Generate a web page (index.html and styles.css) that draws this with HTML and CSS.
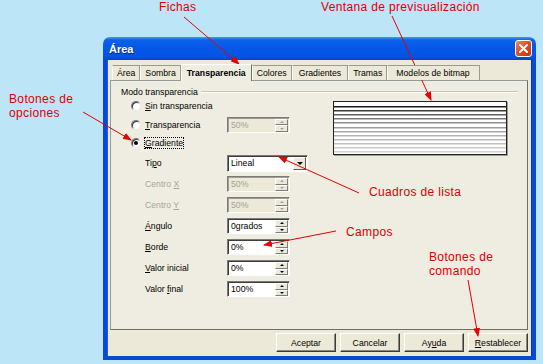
FILE: index.html
```html
<!DOCTYPE html>
<html>
<head>
    <meta charset="utf-8">
    <link rel="stylesheet" href="styles.css">
</head>
<body>
    <div class="window">
        <div class="titlebar">
            <span class="title">Área</span>
            <span class="close">
                <svg width="9" height="9" viewBox="0 0 9 9">
                    <path d="M1 1 L8 8 M8 1 L1 8" stroke="#fff" stroke-width="2" stroke-linecap="square"/>
                </svg>
            </span>
        </div>

        <div class="frame">
            <div class="tabs">
                <div class="tab">Área</div>
                <div class="tab">Sombra</div>
                <div class="tab active">Transparencia</div>
                <div class="tab">Colores</div>
                <div class="tab roomy">Gradientes</div>
                <div class="tab">Tramas</div>
                <div class="tab wide">Modelos de bitmap</div>
            </div>

            <div class="panel">
                <div class="group-title">
                    <span>Modo transparencia</span>
                    <div class="rule"></div>
                </div>

                <div class="group-body">
                    <div class="form">
                        <div class="radio-row">
                            <span class="radio"></span>
                            <label><u>S</u>in transparencia</label>
                        </div>
                        <div class="radio-row">
                            <span class="radio"></span>
                            <label><u>T</u>ransparencia</label>
                            <div class="field disabled">
                                <span class="value">50%</span>
                                <span class="spinner"><span class="up"></span><span class="down"></span></span>
                            </div>
                        </div>
                        <div class="radio-row">
                            <span class="radio checked"></span>
                            <label><span class="focus"><u>G</u>radiente</span></label>
                        </div>

                        <div class="field-row">
                            <label>Ti<u>p</u>o</label>
                            <div class="field select">
                                <span class="value">Lineal</span>
                                <span class="drop"></span>
                            </div>
                        </div>
                        <div class="field-row">
                            <label class="dim">Centro <u>X</u></label>
                            <div class="field disabled">
                                <span class="value">50%</span>
                                <span class="spinner"><span class="up"></span><span class="down"></span></span>
                            </div>
                        </div>
                        <div class="field-row">
                            <label class="dim">Centro <u>Y</u></label>
                            <div class="field disabled">
                                <span class="value">50%</span>
                                <span class="spinner"><span class="up"></span><span class="down"></span></span>
                            </div>
                        </div>
                        <div class="field-row">
                            <label><u>Á</u>ngulo</label>
                            <div class="field">
                                <span class="value">0grados</span>
                                <span class="spinner"><span class="up"></span><span class="down"></span></span>
                            </div>
                        </div>
                        <div class="field-row">
                            <label><u>B</u>orde</label>
                            <div class="field">
                                <span class="value">0%</span>
                                <span class="spinner"><span class="up"></span><span class="down"></span></span>
                            </div>
                        </div>
                        <div class="field-row">
                            <label><u>V</u>alor inicial</label>
                            <div class="field">
                                <span class="value">0%</span>
                                <span class="spinner"><span class="up"></span><span class="down"></span></span>
                            </div>
                        </div>
                        <div class="field-row">
                            <label>Valor <u>f</u>inal</label>
                            <div class="field">
                                <span class="value">100%</span>
                                <span class="spinner"><span class="up"></span><span class="down"></span></span>
                            </div>
                        </div>
                    </div>

                    <!-- preview of the gradient transparency -->
                    <div class="preview">
                        <svg width="172" height="52" viewBox="0 0 172 52">
                            <rect x="0" y="4" width="172" height="1.5" fill="#1a1a1a"/>
                            <rect x="0" y="8" width="172" height="1.5" fill="#3c3c3c"/>
                            <rect x="0" y="12" width="172" height="1.5" fill="#5e5e5e"/>
                            <rect x="0" y="16" width="172" height="1.5" fill="#7a7a7a"/>
                            <rect x="0" y="20" width="172" height="1.5" fill="#8e8e8e"/>
                            <rect x="0" y="25" width="172" height="1.5" fill="#9c9c9c"/>
                            <rect x="0" y="29" width="172" height="1.5" fill="#a8a8a8"/>
                            <rect x="0" y="33" width="172" height="1.5" fill="#b2b2b2"/>
                            <rect x="0" y="37" width="172" height="1.5" fill="#bababa"/>
                            <rect x="0" y="41" width="172" height="1.5" fill="#c2c2c2"/>
                            <rect x="0" y="45" width="172" height="1.5" fill="#cacaca"/>
                            <rect x="0" y="49" width="172" height="1.5" fill="#d2d2d2"/>
                        </svg>
                    </div>
                </div>
            </div>

            <div class="buttons">
                <button>Aceptar</button>
                <button>Cancelar</button>
                <button>Ay<u>u</u>da</button>
                <button><u>R</u>establecer</button>
            </div>
        </div>
    </div>

    <!-- red callouts drawn over the screenshot -->
    <div class="notes">
        <svg class="arrows" width="543" height="364">
            <defs>
                <marker id="head" markerUnits="userSpaceOnUse" markerWidth="9" markerHeight="7" refX="8" refY="3.5" orient="auto">
                    <path d="M0 0 L9 3.5 L0 7 z" fill="#e60000"/>
                </marker>
            </defs>
            <line x1="184" y1="17" x2="239" y2="64" marker-end="url(#head)"/>
            <line x1="392" y1="16" x2="431" y2="100" marker-end="url(#head)"/>
            <line x1="83" y1="112" x2="131" y2="140" marker-end="url(#head)"/>
            <line x1="359" y1="193" x2="279" y2="157" marker-end="url(#head)"/>
            <line x1="336" y1="231" x2="264" y2="245" marker-end="url(#head)"/>
            <line x1="468" y1="280" x2="478" y2="336" marker-end="url(#head)"/>
        </svg>
        <span class="note n-fichas">Fichas</span>
        <span class="note n-preview">Ventana de previsualización</span>
        <span class="note n-options">Botones de<br>opciones</span>
        <span class="note n-lists">Cuadros de lista</span>
        <span class="note n-fields">Campos</span>
        <span class="note n-commands">Botones de<br>comando</span>
    </div>
</body>
</html>
```

FILE: styles.css
```css
body {
    margin: 0;
    width: 543px;
    height: 364px;
    box-sizing: border-box;
    padding: 37px 0 0 103px;
    background: #bce5f8;
    font-family: "Liberation Sans", Arial, sans-serif;
    font-size: 8.7px;
    color: #000;
    position: relative;
    overflow: hidden;
}

.window {
    width: 433px;
    height: 323px;
    display: flex;
    flex-direction: column;
}

.titlebar {
    height: 23px;
    flex: none;
    display: flex;
    align-items: center;
    justify-content: space-between;
    padding: 0 4px 0 6px;
    border-radius: 7px 7px 0 0;
    background: linear-gradient(#4a94f6 0, #0d61e8 3px, #0559e9 40%, #0353e0 85%, #0845c8 100%);
}
.title {
    color: #fff;
    font-weight: bold;
    font-size: 11px;
    text-shadow: 1px 1px 0 #0a2a80;
}
.close {
    width: 17px;
    height: 17px;
    box-sizing: border-box;
    border: 1px solid #fff;
    border-radius: 3px;
    background: linear-gradient(135deg, #f08a66, #dd4a22 50%, #c2360f);
    display: flex;
    align-items: center;
    justify-content: center;
}

.frame {
    flex: 1;
    display: flex;
    flex-direction: column;
    background: #ece9d8;
    border: 4px solid #0a48d6;
    border-top: 0;
    box-shadow: inset 1px 0 0 #1a5de8, inset -1px 0 0 #0034b0;
    padding: 5px 4px 4px 3px;
}

/* tabs */
.tabs {
    display: flex;
    align-items: flex-end;
    height: 15px;
    padding-left: 2px;
    position: relative;
    z-index: 1;
}
.tab {
    height: 14px;
    line-height: 14px;
    padding: 0 4px;
    border: 1px solid #9a9a8e;
    border-left-color: #fff;
    border-bottom: 0;
    background: #ece9d8;
    white-space: nowrap;
}
.tab.roomy {
    padding: 0 6px;
}
.tab.wide {
    padding: 0 9px 0 8px;
}
.tab.active {
    height: 16px;
    line-height: 16px;
    margin-bottom: -1px;
    padding: 0 5px;
    font-weight: bold;
    background: #efede2;
    border-color: #fff #716f64 #efede2 #fff;
}

.panel {
    height: 250px;
    box-sizing: border-box;
    border: 1px solid #919b9c;
    border-right-color: #6f6f66;
    border-bottom-color: #6f6f66;
    background: #efede2;
    padding: 6px 9px 0 10px;
}

.group-title {
    display: flex;
    align-items: center;
    height: 10px;
    line-height: 10px;
}
.rule {
    flex: 1;
    height: 1px;
    margin-left: 3px;
    background: #c6c3b0;
    border-bottom: 1px solid #fff;
}

.group-body {
    display: flex;
}
.form {
    width: 200px;
}

.radio-row {
    height: 18.5px;
    display: flex;
    align-items: center;
    padding-left: 10px;
}
.radio {
    width: 10px;
    height: 10px;
    box-sizing: border-box;
    margin-right: 4px;
    border-radius: 50%;
    border: 1px solid;
    border-color: #7c7c7c #e8e8e8 #e8e8e8 #7c7c7c;
    background: #fff;
    box-shadow: inset 1px 1px 0 #333;
    display: flex;
    align-items: center;
    justify-content: center;
}
.radio.checked::after {
    content: "";
    width: 4px;
    height: 4px;
    border-radius: 50%;
    background: #000;
}
label {
    width: 82px;
    flex: none;
    white-space: nowrap;
}
.focus {
    outline: 1px dotted #000;
    outline-offset: 0;
}

.field-row {
    height: 21px;
    display: flex;
    align-items: center;
    padding-left: 24px;
}
label.dim {
    color: #a8a697;
}

.field {
    width: 63px;
    height: 16px;
    box-sizing: border-box;
    display: flex;
    background: #fff;
    border: 1px solid;
    border-color: #7a7a7a #fff #fff #7a7a7a;
    box-shadow: inset 1px 1px 0 #3c3c3c;
}
.field .value {
    flex: 1;
    padding: 1px 0 0 3px;
    line-height: 13px;
    white-space: nowrap;
}
.field.disabled {
    background: #ece9d8;
    color: #a3a296;
    box-shadow: inset 1px 1px 0 #9f9d90;
}
.field.select {
    width: 81px;
    height: 17px;
}

.spinner {
    width: 13px;
    display: flex;
    flex-direction: column;
    padding: 1px 1px 0 0;
}
.spinner span {
    flex: 1;
    background: #ece9d8;
    border: 1px solid;
    border-color: #fff #7c7c7c #7c7c7c #fff;
    display: flex;
    align-items: center;
    justify-content: center;
}
.spinner .up::after,
.spinner .down::after {
    content: "";
    border-left: 2px solid transparent;
    border-right: 2px solid transparent;
}
.spinner .up::after {
    border-bottom: 2px solid #000;
}
.spinner .down::after {
    border-top: 2px solid #000;
}
.disabled .spinner .up::after {
    border-bottom-color: #a3a296;
}
.disabled .spinner .down::after {
    border-top-color: #a3a296;
}

.drop {
    width: 11px;
    margin: 1px 1px 1px 0;
    background: #ece9d8;
    border: 1px solid;
    border-color: #fff #5c5c5c #5c5c5c #fff;
    display: flex;
    align-items: center;
    justify-content: center;
}
.drop::after {
    content: "";
    border-left: 3px solid transparent;
    border-right: 3px solid transparent;
    border-top: 3px solid #000;
}

.preview {
    width: 174px;
    height: 54px;
    box-sizing: border-box;
    margin: 4px 0 0 12px;
    border: 1px solid #222;
    background: #fff;
    box-shadow: 1px 1px 0 #a09e92;
}
.preview svg {
    display: block;
}

/* command buttons */
.buttons {
    display: flex;
    justify-content: flex-end;
    gap: 4px;
    margin-top: 3px;
}
button {
    width: 60px;
    height: 19px;
    padding: 0;
    font-family: "Liberation Sans", Arial, sans-serif;
    font-size: 8.7px;
    color: #000;
    background: #ece9d8;
    border: 1px solid;
    border-color: #fff #3a3a3a #3a3a3a #fff;
    box-shadow: inset -1px -1px 0 #8a887c;
}

/* callouts */
.notes {
    position: absolute;
    left: 0;
    top: 0;
    width: 543px;
    height: 364px;
    pointer-events: none;
}
.arrows {
    position: absolute;
    left: 0;
    top: 0;
}
.arrows line {
    stroke: #e60000;
    stroke-width: 1;
}
.note {
    position: absolute;
    font-family: "Liberation Sans", Arial, sans-serif;
    font-size: 12px;
    line-height: 14px;
    letter-spacing: 0.35px;
    color: #dd0000;
    white-space: nowrap;
}
.n-fichas { left: 159px; top: 0; }
.n-preview { left: 321px; top: 0; }
.n-options { left: 9px; top: 92px; }
.n-lists { left: 369px; top: 185px; }
.n-fields { left: 346px; top: 225px; }
.n-commands { left: 429px; top: 250px; }
```
